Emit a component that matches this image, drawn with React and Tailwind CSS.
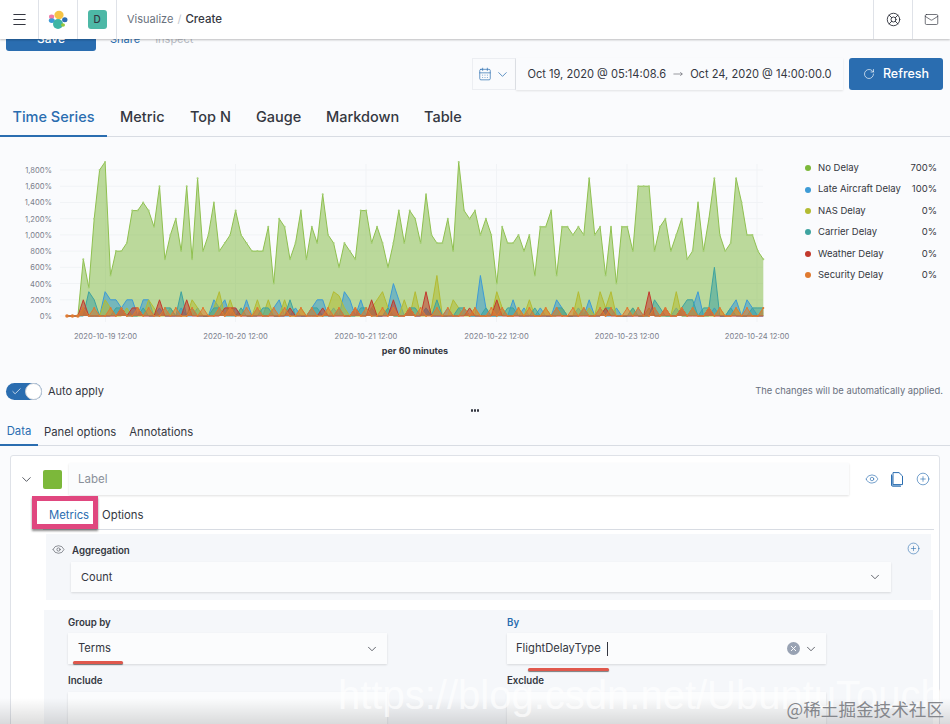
import { ChevronDown, Menu, LifeBuoy, Mail, CalendarDays, RotateCw, Check, Eye, CirclePlus, X, MoveRight } from 'lucide-react'

const noDelay = [
  0, 0, 0, 7, 3.5, 12, 18, 19, 5, 8, 8, 9, 13, 13, 14, 13, 11, 16, 7, 10, 12, 8, 16, 7, 17, 8, 10, 14, 8, 9, 10, 13,
  10, 9, 8, 8, 8, 11, 4, 12, 11, 7, 9, 13, 7, 11, 9, 15, 10, 9, 6, 9, 8, 7, 13, 13, 9, 11, 9, 6, 9, 13,
  9, 13, 12, 9, 15, 10, 9, 9, 12, 8, 19, 13, 12, 13, 10, 12, 10, 4, 11, 9, 9, 10, 8, 10, 5, 11, 11, 13, 5, 11, 11, 10,
  11, 10, 17, 10, 11, 5, 11, 4, 11, 11, 8, 16, 16, 16, 8, 11, 12, 8, 10, 12, 7, 8, 14, 8, 12, 17, 10, 8, 9, 17, 14, 10,
  10, 8, 7,
]

function sparse(peaks, fill, from = 3) {
  return noDelay.map((_, i) => {
    if (peaks[i] !== undefined) return peaks[i]
    return i >= from && fill(i) ? 1 : 0
  })
}

const series = [
  { name: 'No Delay', value: '700%', color: '#7cb83a', data: noDelay },
  {
    name: 'Late Aircraft Delay',
    value: '100%',
    color: '#3d9bd6',
    data: sparse(
      { 7: 3, 8: 2, 9: 2, 11: 2, 12: 2, 14: 2, 15: 2, 27: 2, 29: 2, 33: 2, 39: 2, 46: 2, 47: 2, 51: 3, 52: 2, 54: 2, 60: 4, 61: 2, 76: 5, 82: 2, 90: 2, 96: 2, 116: 3, 123: 2, 125: 2 },
      (i) => (i * 5) % 7 < 2,
    ),
  },
  {
    name: 'NAS Delay',
    value: '0%',
    color: '#b3bb32',
    data: sparse(
      { 7: 2, 15: 2, 23: 2, 28: 3, 30: 2, 35: 2, 37: 2, 40: 2, 49: 3, 50: 2.5, 57: 2, 58: 3, 62: 2, 64: 3, 68: 5, 71: 2, 79: 3, 85: 2, 94: 3, 98: 3, 100: 3, 112: 3 },
      (i) => (i * 3) % 8 < 2,
    ),
  },
  {
    name: 'Carrier Delay',
    value: '0%',
    color: '#3ea3a0',
    data: sparse(
      { 4: 3, 5: 2, 21: 3, 41: 2, 68: 2, 66: 1, 90: 1, 108: 2, 114: 2, 115: 2, 119: 6, 128: 1 },
      (i) => (i * 11) % 9 < 3,
    ),
  },
  {
    name: 'Weather Delay',
    value: '0%',
    color: '#c2392d',
    data: sparse(
      { 3: 2, 10: 1, 12: 1, 13: 1, 17: 2, 22: 2, 29: 1, 30: 1, 31: 1, 41: 1, 47: 1, 53: 1, 56: 2, 60: 2, 63: 1, 66: 3, 74: 1, 79: 2, 99: 1, 107: 3, 110: 1, 113: 1, 118: 1 },
      () => false,
    ),
  },
  {
    name: 'Security Delay',
    value: '0%',
    color: '#e07a30',
    data: sparse({ 0: 0, 1: 0, 2: 0, 3: 1 }, (i) => (i * 7) % 5 < 2),
  },
]

const xAt = (i) => 67 + i * 5.44
const yAt = (v) => 166 - v * 8.11

function Chart() {
  const yTicks = [0, 2, 4, 6, 8, 10, 12, 14, 16, 18]
  const xTicks = [
    [105.5, '2020-10-19 12:00'],
    [235.5, '2020-10-20 12:00'],
    [366, '2020-10-21 12:00'],
    [496.5, '2020-10-22 12:00'],
    [627, '2020-10-23 12:00'],
    [757, '2020-10-24 12:00'],
  ]
  return (
    <svg width="800" height="210" className="shrink-0">
      {yTicks.map((t) => (
        <g key={t}>
          <line x1="60" x2="763" y1={yAt(t)} y2={yAt(t)} stroke="#f1f3f6" />
          <text x="52" y={yAt(t) + 3} textAnchor="end" fontSize="7.6" fill="#7a808c">
            {t === 0 ? '0%' : `${(t * 100).toLocaleString('en-US')}%`}
          </text>
        </g>
      ))}
      {xTicks.map(([x, label]) => (
        <g key={label}>
          <line x1={x} x2={x} y1="14" y2="172" stroke="#f1f3f6" />
          <text x={x} y="189" textAnchor="middle" fontSize="7.6" fill="#7a808c">
            {label}
          </text>
        </g>
      ))}
      <text x="415" y="204" textAnchor="middle" fontSize="9" fontWeight="700" fill="#343741">
        per 60 minutes
      </text>
      {series.map((s, n) => {
        const line = s.data.map((v, i) => `${xAt(i).toFixed(1)},${yAt(v).toFixed(1)}`).join(' ')
        const area = `${xAt(0)},${yAt(0)} ${line} ${xAt(s.data.length - 1)},${yAt(0)}`
        return (
          <g key={s.name}>
            <polygon points={area} fill={s.color} fillOpacity={n === 0 ? 0.5 : 0.55} />
            <polyline points={line} fill="none" stroke={n === 0 ? '#8fc04f' : s.color} strokeWidth="1" />
          </g>
        )
      })}
      {series[0].data.map((v, i) => (
        <circle key={i} cx={xAt(i)} cy={yAt(v)} r="1" fill="#a6cf78" />
      ))}
      {series[5].data.map((v, i) => (
        <circle key={i} cx={xAt(i)} cy={yAt(v)} r={i < 3 ? 1.8 : 1} fill="#e07a30" />
      ))}
    </svg>
  )
}

function ElasticLogo() {
  return (
    <svg width="20" height="20" viewBox="0 0 20 20">
      <ellipse cx="11" cy="5" rx="4.6" ry="4.2" fill="#f6c445" />
      <ellipse cx="3.6" cy="6.8" rx="2.6" ry="2.4" fill="#f07aa5" />
      <ellipse cx="3.8" cy="10.6" rx="3" ry="2.4" fill="#3d9bd6" />
      <ellipse cx="10" cy="14" rx="5" ry="5" fill="#3fb5a5" />
      <ellipse cx="16.8" cy="9.8" rx="2.7" ry="2.5" fill="#2d6db3" />
      <ellipse cx="15" cy="15" rx="2" ry="1.8" fill="#93c83e" />
    </svg>
  )
}

function CopyIcon() {
  return (
    <svg width="14" height="15" viewBox="0 0 14 15" fill="none" stroke="#2a6db0" strokeWidth="1">
      <path d="M1.5 2.5 V13 a1.2 1.2 0 0 0 1.2 1.2 H11" fill="#a9c6e2" />
      <path d="M3 .6 H9 L12.5 4 V12.6 H3 Z" fill="#fff" />
    </svg>
  )
}

function Select({ className, children }) {
  return (
    <div className={`flex items-center bg-[#fbfcfd] shadow-[0_1px_2px_rgba(0,0,0,0.12)] ${className}`}>{children}</div>
  )
}

function Divider() {
  return <div className="w-px h-[39px] bg-[#dfe2e8] shrink-0" />
}

function Tab({ active, className, children }) {
  return (
    <div className={`flex items-center ${active ? 'text-[#2a6db0]' : 'text-[#343741]'} ${className}`}>{children}</div>
  )
}

export default function App() {
  return (
    <div className="relative w-[950px] h-[724px] overflow-hidden bg-[#fafbfd] text-[#343741] font-['Inter',sans-serif]">
      {/* top bar */}
      <header className="relative z-10 h-[39px] flex items-center bg-white shadow-[0_1px_2px_rgba(0,0,0,0.25)]">
        <div className="w-[38px] flex justify-center">
          <Menu size={17} strokeWidth={1.6} />
        </div>
        <Divider />
        <div className="w-[38px] flex justify-center">
          <ElasticLogo />
        </div>
        <Divider />
        <div className="w-[38px] flex justify-center">
          <div className="w-[19px] h-[19px] rounded-[3px] bg-[#4db8a6] flex items-center justify-center text-[10px] font-medium">
            D
          </div>
        </div>
        <Divider />
        <div className="ml-[10px] flex items-center gap-[4px] text-[11px]">
          <span className="text-[#69707d]">Visualize</span>
          <span className="text-[#c2c6cd]">/</span>
          <span className="font-medium text-[11.5px]">Create</span>
        </div>
        <div className="ml-auto flex">
          <Divider />
          <div className="w-[38px] flex justify-center items-center">
            <LifeBuoy size={15} strokeWidth={1.5} />
          </div>
          <Divider />
          <div className="w-[37px] flex justify-center items-center">
            <Mail size={15} strokeWidth={1.1} />
          </div>
        </div>
      </header>

      {/* action links, scrolled under the bar */}
      <div className="-mt-[12px] h-6 pl-[6px] flex items-center">
        <div className="w-[90px] h-6 rounded-[3px] bg-[#2a6db0] text-white text-[12px] font-medium flex items-center justify-center">
          Save
        </div>
        <span className="ml-[14px] text-[11px] text-[#2a6db0]">Share</span>
        <span className="ml-[15px] text-[11px] text-[#b8bcc4]">Inspect</span>
      </div>

      {/* time range */}
      <div className="mt-[7px] pr-[7px] flex justify-end">
        <div className="h-8 w-[44px] flex items-center justify-center gap-[3px] border border-[#eceef2] border-r-[#e3e6eb]">
          <CalendarDays size={14} strokeWidth={1.2} className="text-[#2a6db0]" />
          <ChevronDown size={15} strokeWidth={1.2} className="text-[#2a6db0]" />
        </div>
        <div className="h-8 w-[327px] flex items-center justify-center gap-[7px] text-[11.1px] shadow-[0_1px_2px_rgba(0,0,0,0.1)]">
          <span>Oct 19, 2020 @ 05:14:08.6</span>
          <MoveRight size={10} strokeWidth={1.2} />
          <span>Oct 24, 2020 @ 14:00:00.0</span>
        </div>
        <div className="ml-[6px] h-8 w-[94px] rounded-[3px] bg-[#2a6db0] text-white text-[12.5px] font-medium flex items-center justify-center gap-[8px]">
          <RotateCw size={12} strokeWidth={1.3} />
          Refresh
        </div>
      </div>

      {/* visualization types */}
      <div className="mt-[13px] h-[34px] flex border-b border-[#d8dce3] text-[14.5px] font-medium">
        <Tab active className="w-[107px] justify-center border-b-2 border-[#2a6db0] h-[34px] pb-[4px]">
          Time Series
        </Tab>
        <Tab className="ml-[13px] w-[70px] pb-[6px]">Metric</Tab>
        <Tab className="w-[66px] pb-[6px]">Top N</Tab>
        <Tab className="w-[70px] pb-[6px]">Gauge</Tab>
        <Tab className="w-[98px] pb-[6px]">Markdown</Tab>
        <Tab className="pb-[6px]">Table</Tab>
      </div>

      {/* chart and legend */}
      <div className="mt-[13px] h-[210px] flex">
        <Chart />
        <div className="ml-[5px] w-[132px] pt-[7.5px] flex flex-col text-[9.5px]">
          {series.map((s) => (
            <div key={s.name} className="h-[21.4px] flex items-center">
              <span className="w-[6px] h-[6px] rounded-full mr-[7px]" style={{ backgroundColor: s.color }} />
              <span className="flex-1">{s.name}</span>
              <span>{s.value}</span>
            </div>
          ))}
        </div>
      </div>

      {/* auto apply */}
      <div className="mt-[23px] h-[17px] pl-[6px] pr-[7px] flex items-center">
        <div className="relative w-[36px] h-[17px] rounded-full bg-[#2a6db0] flex items-center pl-[5px]">
          <Check size={11} strokeWidth={1.5} className="text-white" />
          <div className="absolute right-0 top-0 w-[17px] h-[17px] rounded-full bg-white border border-[#c9ced6]" />
        </div>
        <span className="ml-[6px] text-[11px]">Auto apply</span>
        <span className="ml-auto text-[9.4px] text-[#69707d]">The changes will be automatically applied.</span>
      </div>

      <div className="mt-[9px] h-[4px] flex justify-center gap-[1px]">
        <span className="w-[2px] h-[3px] rounded-full bg-[#343741]" />
        <span className="w-[2px] h-[3px] rounded-full bg-[#343741]" />
        <span className="w-[2px] h-[3px] rounded-full bg-[#343741]" />
      </div>

      {/* panel tabs */}
      <div className="mt-[6px] h-[27px] flex border-b border-[#d8dce3] text-[11.3px]">
        <Tab active className="w-[38px] justify-center border-b-2 border-[#2a6db0] h-[27px]">
          Data
        </Tab>
        <Tab className="ml-[6px]">Panel options</Tab>
        <Tab className="ml-[13px]">Annotations</Tab>
      </div>

      {/* series card */}
      <div className="mt-[9px] mx-[10px] h-[300px] rounded-t-[3px] border border-[#dfe2e8] bg-white pt-[7px]">
        <div className="h-[32px] flex items-center">
          <ChevronDown size={15} strokeWidth={1.3} className="ml-[8px]" />
          <div className="ml-[9px] w-[19px] h-[19px] rounded-[2px] bg-[#7cb83a]" />
          <div className="ml-[7px] w-[780px] h-[32px] bg-[#fbfcfd] shadow-[0_1px_2px_rgba(0,0,0,0.12)] flex items-center pl-[9px] pt-[2px] text-[11.5px] text-[#8a909a]">
            Label
          </div>
          <Eye size={14} strokeWidth={1.1} className="ml-[16px] text-[#2a6db0]" />
          <div className="ml-[11px] flex">
            <CopyIcon />
          </div>
          <CirclePlus size={14} strokeWidth={1.1} className="ml-[12px] text-[#2a6db0]" />
        </div>

        <div className="relative ml-[32px] mr-[5px] mt-[7px] h-[28px] flex items-center border-b border-[#d8dce3] text-[11.3px]">
          <span className="ml-[6px] text-[#2a6db0]">Metrics</span>
          <span className="ml-[13px]">Options</span>
          <div className="absolute -left-[11px] -top-[6px] w-[66px] h-[33px] border-[5px] border-[#e0477f] shadow-[0_2px_2px_rgba(0,0,0,0.45)]" />
        </div>

        {/* aggregation */}
        <div className="ml-[35px] mr-[8px] mt-[4px] h-[66px] bg-[#f5f7fa] relative">
          <div className="h-[28px] flex items-center pl-[6px] pt-[3px]">
            <Eye size={13} strokeWidth={1} className="text-[#343741]" />
            <span className="ml-[7px] mt-[3px] text-[9.7px] font-semibold">Aggregation</span>
            <CirclePlus size={13} strokeWidth={1.1} className="ml-auto mr-[11px] -mt-[2px] text-[#2a6db0]" />
          </div>
          <Select className="ml-[25px] w-[820px] h-[30px] pl-[10px] pr-[9px] text-[11px] justify-between">
            Count
            <ChevronDown size={14} strokeWidth={1.3} />
          </Select>
        </div>

        {/* group by */}
        <div className="ml-[33px] mr-[6px] mt-[10px] h-[120px] bg-[#f5f7fa] pl-[24px] pt-[6px] grid grid-cols-[439px_320px] text-[9.7px] font-semibold">
          <div>
            <div className="h-[14px] flex items-center">Group by</div>
            <Select className="relative mt-[3px] w-[319px] h-[31px] pl-[10px] pr-[8px] text-[11.2px] font-normal justify-between">
              Terms
              <ChevronDown size={14} strokeWidth={1.3} />
              <div className="absolute left-[5px] top-[28px] w-[50px] h-[3px] rounded-full bg-[#e0584c] shadow-[0_1px_1px_rgba(0,0,0,0.5)]" />
            </Select>
            <div className="mt-[10px] h-[14px] flex items-center">Include</div>
            <div className="mt-[4px] w-[319px] h-[40px] bg-[#fbfcfd] shadow-[0_1px_2px_rgba(0,0,0,0.12)]" />
          </div>
          <div>
            <div className="h-[14px] flex items-center text-[#2a6db0]">By</div>
            <Select className="relative mt-[3px] w-[319px] h-[31px] pl-[9px] pr-[8px] text-[11.2px] font-normal">
              FlightDelayType
              <span className="ml-[6px] w-px h-[14px] bg-[#343741]" />
              <span className="ml-auto w-[13px] h-[13px] rounded-full bg-[#98a2b3] flex items-center justify-center">
                <X size={9} strokeWidth={2.5} className="text-white" />
              </span>
              <ChevronDown size={14} strokeWidth={1.3} className="ml-[4px]" />
              <div className="absolute left-[21px] top-[35px] w-[81px] h-[3px] rounded-full bg-[#e0584c] shadow-[0_1px_1px_rgba(0,0,0,0.5)]" />
            </Select>
            <div className="mt-[10px] h-[14px] flex items-center">Exclude</div>
            <div className="mt-[4px] w-[319px] h-[40px] bg-[#fbfcfd] shadow-[0_1px_2px_rgba(0,0,0,0.12)]" />
          </div>
        </div>
      </div>

      {/* image watermarks */}
      <div className="absolute inset-x-0 bottom-0 h-[26px] bg-gradient-to-b from-transparent to-[#00000022]" />
      <div className="absolute left-[338px] top-[665px] whitespace-nowrap text-[40px] text-white/70 font-['Liberation_Sans',sans-serif]">
        https://blog.csdn.net/UbuntuTouch
      </div>
      <div className="absolute right-[6px] top-[696px] whitespace-nowrap text-[17.6px] text-[#85878c] font-['Noto_Sans_CJK_SC',sans-serif]">
        @稀土掘金技术社区
      </div>
    </div>
  )
}
